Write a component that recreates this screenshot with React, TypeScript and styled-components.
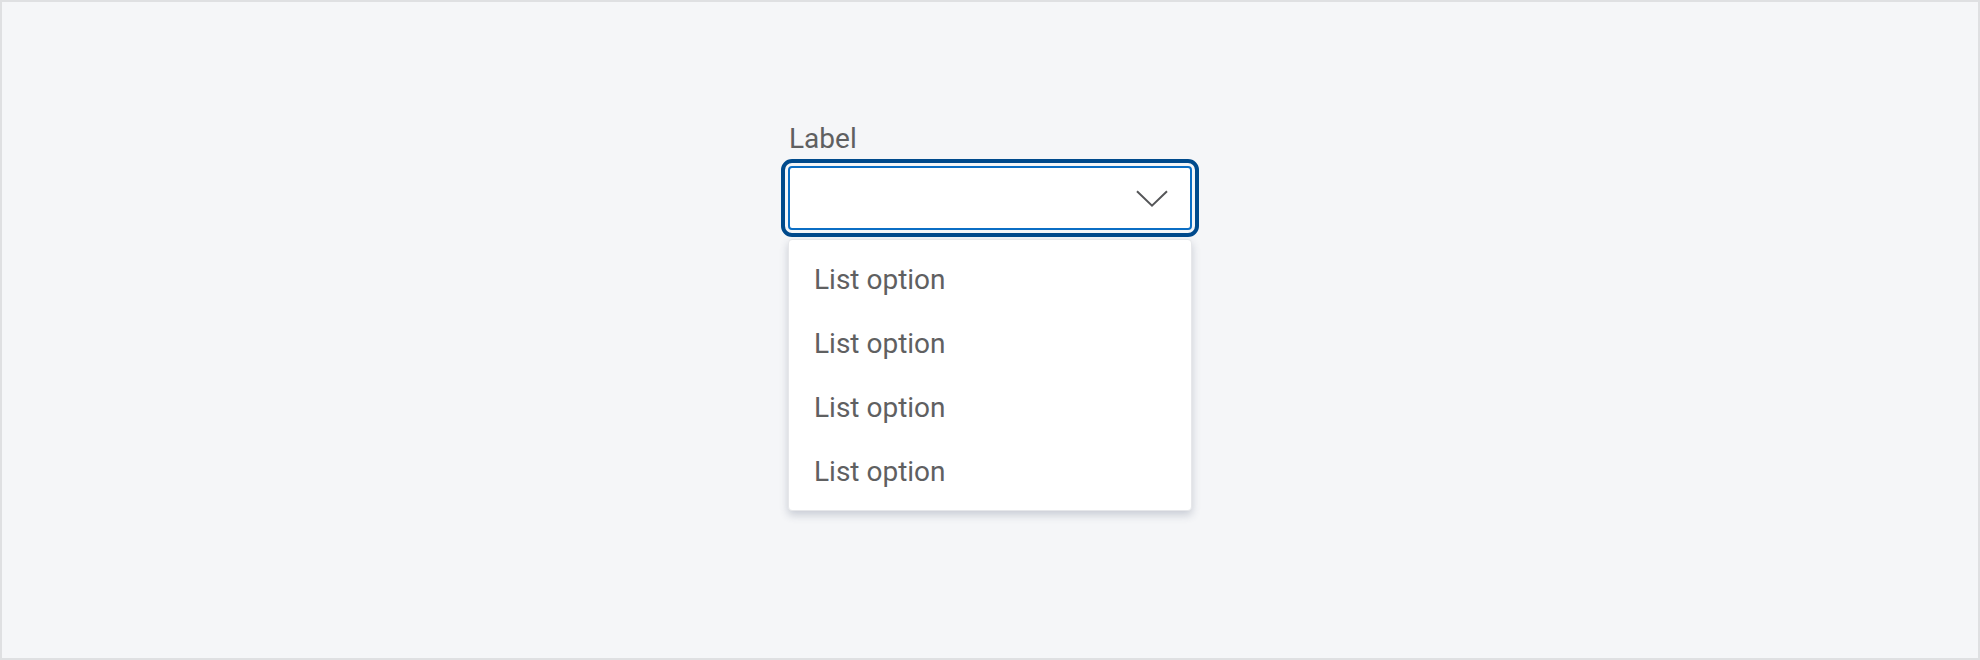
import React from "react";
import styled, { createGlobalStyle } from "styled-components";

const Global = createGlobalStyle`
  html, body { margin: 0; padding: 0; }
  body { font-family: Roboto, "Liberation Sans", Arial, sans-serif; }
  * { box-sizing: border-box; }
`;

const Page = styled.div`
  width: 1980px;
  height: 660px;
  background: #f5f6f8;
  border: 2px solid #dfe0e2;
  display: flex;
  justify-content: center;
  padding-top: 119px;
`;

const Field = styled.div`
  width: 404px;
  display: flex;
  flex-direction: column;
`;

const Label = styled.label`
  font-size: 28px;
  line-height: 36px;
  color: #5f6061;
  padding-left: 1px;
  margin-bottom: 9px;
`;

const SelectBox = styled.div`
  height: 64px;
  background: #ffffff;
  border: 2px solid #0b6ec4;
  border-radius: 4px;
  outline: 4px solid #004a8c;
  outline-offset: 3px;
  display: flex;
  align-items: center;
  justify-content: flex-end;
  padding-right: 22px;
`;

const Menu = styled.ul`
  list-style: none;
  margin: 9px 0 0;
  padding: 7px 0;
  background: #ffffff;
  border-radius: 4px;
  border: 1px solid #e6e7ea;
  box-shadow: 0 4px 8px rgba(60, 72, 100, 0.24);
`;

const Option = styled.li`
  height: 64px;
  display: flex;
  align-items: center;
  padding-left: 25px;
  font-size: 28px;
  color: #5f6061;
`;

const Chevron = () => (
  <svg width="32" height="17" viewBox="0 0 32 17" fill="none">
    <path d="M1 1.2 L16 15.6 L31 1.2" stroke="#555658" strokeWidth="2" />
  </svg>
);

export default function App() {
  const options = ["List option", "List option", "List option", "List option"];
  return (
    <>
      <Global />
      <Page>
        <Field>
          <Label>Label</Label>
          <SelectBox>
            <Chevron />
          </SelectBox>
          <Menu>
            {options.map((o, i) => (
              <Option key={i}>{o}</Option>
            ))}
          </Menu>
        </Field>
      </Page>
    </>
  );
}
